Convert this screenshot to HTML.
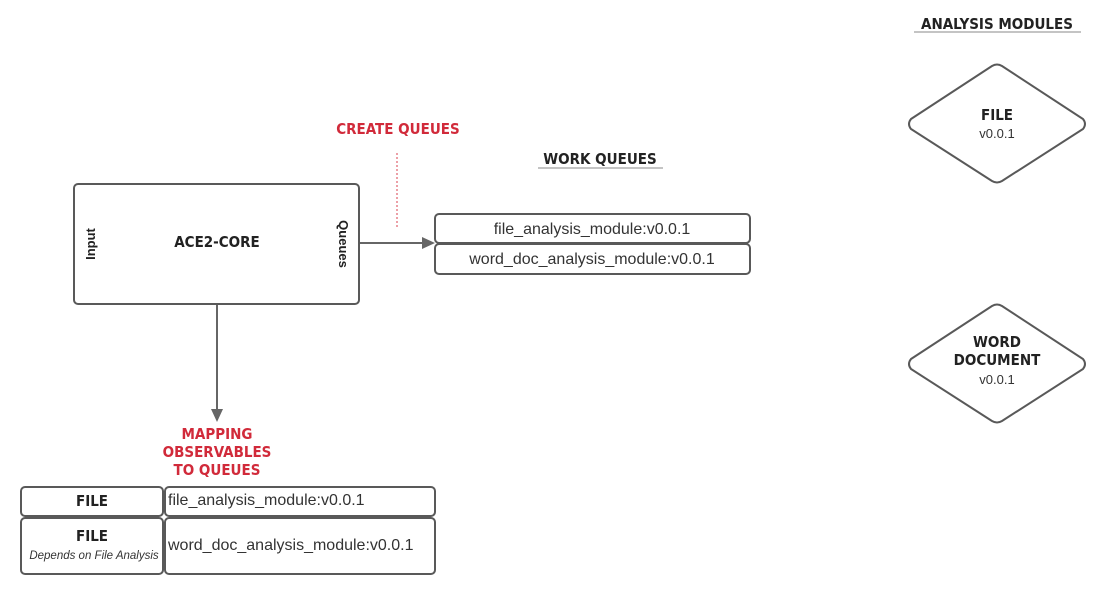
<!DOCTYPE html>
<html><head><meta charset="utf-8"><style>
html,body{margin:0;padding:0;background:#fff;}
svg{display:block;}
.h{font-family:"DejaVu Sans Condensed","DejaVu Sans",sans-serif;font-weight:bold;}
.s{font-family:"Liberation Sans",sans-serif;}
</style></head><body>
<svg width="1098" height="595" viewBox="0 0 1098 595" xmlns="http://www.w3.org/2000/svg">
<g fill="#fff" stroke="#595959" stroke-width="2">
<rect x="74" y="184" width="285" height="120" rx="4"/>
<rect x="435" y="214" width="315" height="29" rx="4"/>
<rect x="435" y="244" width="315" height="30" rx="4"/>
<rect x="21" y="487" width="142" height="29" rx="4"/>
<rect x="165" y="487" width="270" height="29" rx="4"/>
<rect x="21" y="518" width="142" height="56" rx="4"/>
<rect x="165" y="518" width="270" height="56" rx="4"/>
<path d="M911 119 L992 66 Q997 63 1002 66 L1083 119 Q1087 124 1083 129 L1002 181 Q997 184 992 181 L911 129 Q907 124 911 119Z"/>
<path d="M911 359 L992 306 Q997 303 1002 306 L1083 359 Q1087 364 1083 369 L1002 421 Q997 424 992 421 L911 369 Q907 364 911 359Z"/>
</g>
<g stroke="#666" stroke-width="2" fill="none">
<line x1="360" y1="243" x2="424" y2="243"/>
<line x1="217" y1="305" x2="217" y2="410"/>
</g>
<g fill="#666">
<polygon points="435,243 422,237 422,249"/>
<polygon points="217,422 211,409 223,409"/>
</g>
<line x1="397" y1="153" x2="397" y2="228" stroke="#d9424f" stroke-width="1" stroke-dasharray="2,2"/>
<g class="h" fill="#d12a3a" font-size="15" text-anchor="middle">
<text x="398" y="134">CREATE QUEUES</text>
<text x="217" y="439">MAPPING</text>
<text x="217" y="457">OBSERVABLES</text>
<text x="217" y="475">TO QUEUES</text>
</g>
<g class="h" fill="#222" font-size="15" text-anchor="middle">
<text x="600" y="164">WORK QUEUES</text>
<text x="997" y="29">ANALYSIS MODULES</text>
<text x="217" y="247">ACE2-CORE</text>
<text x="92" y="506">FILE</text>
<text x="92" y="541">FILE</text>
<text x="997" y="120">FILE</text>
<text x="997" y="347">WORD</text>
<text x="997" y="365">DOCUMENT</text>
</g>
<line x1="538" y1="168" x2="663" y2="168" stroke="#888" stroke-width="1"/>
<line x1="914" y1="32" x2="1081" y2="32" stroke="#888" stroke-width="1"/>
<g class="s" fill="#333" font-size="13" text-anchor="middle">
<text x="997" y="138">v0.0.1</text>
<text x="997" y="384">v0.0.1</text>
</g>
<text class="s" x="94" y="559" font-size="11.5" font-style="italic" fill="#333" text-anchor="middle">Depends on File Analysis</text>
<g class="s" font-size="13" font-weight="bold" fill="#222" text-anchor="middle">
<text transform="translate(95,244) rotate(-90)">Input</text>
<text transform="translate(339,244) rotate(90)">Queues</text>
</g>
<g class="s" font-size="16" fill="#333">
<text x="592" y="234" text-anchor="middle">file_analysis_module:v0.0.1</text>
<text x="592" y="264" text-anchor="middle">word_doc_analysis_module:v0.0.1</text>
<text x="168" y="505">file_analysis_module:v0.0.1</text>
<text x="168" y="550">word_doc_analysis_module:v0.0.1</text>
</g>
</svg>
</body></html>
